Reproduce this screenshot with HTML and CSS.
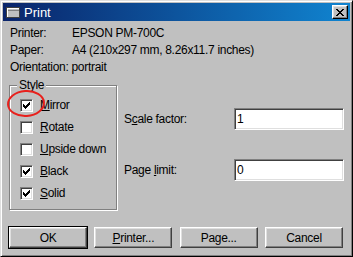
FILE: index.html
```html
<!DOCTYPE html>
<html lang="en">
<head>
    <meta charset="UTF-8">
    <meta name="viewport" content="width=device-width, initial-scale=1.0">
    <link rel="stylesheet" href="styles.css">
</head>
<body>
    <div class="window">
        <div class="titlebar">
            <svg class="title-icon" width="16" height="16" viewBox="0 0 16 16">
                <rect x="1.5" y="3.5" width="13" height="10" fill="#c0c0c0" stroke="#404040"/>
                <path d="M2 4h12v1H2zM2 4h1v9H2z" fill="#fff"/>
                <path d="M3 6h11v1H3z" fill="#808080"/>
            </svg>
            <span class="title">Print</span>
            <button class="close">
                <svg width="8" height="7" viewBox="0 0 8 7">
                    <path d="M0 0h2v1H0zM6 0h2v1H6zM1 1h2v1H1zM5 1h2v1H5zM2 2h4v1H2zM3 3h2v1H3zM2 4h4v1H2zM1 5h2v1H1zM5 5h2v1H5zM0 6h2v1H0zM6 6h2v1H6z" fill="#000"/>
                </svg>
            </button>
        </div>

        <div class="content">
            <div class="info">
                <div class="info-row"><span class="info-label">Printer:</span><span>EPSON PM-700C</span></div>
                <div class="info-row"><span class="info-label">Paper:</span><span>A4 (210x297 mm, 8.26x11.7 inches)</span></div>
                <div class="info-row">Orientation: portrait</div>
            </div>

            <div class="options">
                <fieldset class="group">
                    <legend>Style</legend>
                    <label class="check">
                        <span class="box">
                            <svg width="9" height="9" viewBox="0 0 9 9"><path d="M1 3h1v3H1zM2 4h1v3H2zM3 5h1v3H3zM4 4h1v3H4zM5 3h1v3H5zM6 2h1v3H6zM7 1h1v3H7z" fill="#000"/></svg>
                        </span>
                        <span><u>M</u>irror</span>
                        <svg class="mark" width="40" height="30" viewBox="0 0 40 30">
                            <ellipse cx="20" cy="14.5" rx="18" ry="12.5" fill="none" stroke="#e8201c" stroke-width="2" transform="rotate(-4 20 14.5)"/>
                        </svg>
                    </label>
                    <label class="check">
                        <span class="box"></span>
                        <span><u>R</u>otate</span>
                    </label>
                    <label class="check">
                        <span class="box"></span>
                        <span><u>U</u>pside down</span>
                    </label>
                    <label class="check">
                        <span class="box">
                            <svg width="9" height="9" viewBox="0 0 9 9"><path d="M1 3h1v3H1zM2 4h1v3H2zM3 5h1v3H3zM4 4h1v3H4zM5 3h1v3H5zM6 2h1v3H6zM7 1h1v3H7z" fill="#000"/></svg>
                        </span>
                        <span><u>B</u>lack</span>
                    </label>
                    <label class="check">
                        <span class="box">
                            <svg width="9" height="9" viewBox="0 0 9 9"><path d="M1 3h1v3H1zM2 4h1v3H2zM3 5h1v3H3zM4 4h1v3H4zM5 3h1v3H5zM6 2h1v3H6zM7 1h1v3H7z" fill="#000"/></svg>
                        </span>
                        <span><u>S</u>olid</span>
                    </label>
                </fieldset>

                <div class="fields">
                    <div class="field">
                        <span class="field-label">S<u>c</u>ale factor:</span>
                        <input class="edit" type="text" value="1">
                    </div>
                    <div class="field">
                        <span class="field-label">Page <u>l</u>imit:</span>
                        <input class="edit" type="text" value="0">
                    </div>
                </div>
            </div>

            <div class="buttons">
                <button class="btn default">OK</button>
                <button class="btn"><u>P</u>rinter...</button>
                <button class="btn">Pa<u>g</u>e...</button>
                <button class="btn">Cancel</button>
            </div>
        </div>
    </div>
</body>
</html>
```

FILE: styles.css
```css
body {
    margin: 0;
    font-family: "Liberation Sans", Arial, sans-serif;
    font-size: 12px;
    letter-spacing: -0.3px;
    color: #000;
    background-color: #c0c0c0;
}

.window {
    width: 353px;
    height: 257px;
    box-sizing: border-box;
    border: 1px solid;
    border-color: #dfdfdf #000 #000 #dfdfdf;
    box-shadow: inset 1px 1px #fff, inset -1px -1px #808080;
    padding: 2px;
    background-color: #c0c0c0;
}

.titlebar {
    height: 18px;
    display: flex;
    align-items: center;
    padding: 0 2px;
    background: linear-gradient(to right, #0a246a, #1084d0);
}

.title-icon {
    display: block;
    margin-right: 3px;
}

.title {
    color: #fff;
    font-size: 13px;
    letter-spacing: 0;
}

.close {
    margin-left: auto;
    width: 16px;
    height: 14px;
    padding: 0;
    display: flex;
    align-items: center;
    justify-content: center;
    background-color: #c0c0c0;
    border: 1px solid;
    border-color: #fff #000 #000 #fff;
    box-shadow: inset -1px -1px #808080, inset 1px 1px #dfdfdf;
}

.close svg {
    display: block;
}

.content {
    padding: 4px 6px 0 6px;
}

.info-row {
    height: 17px;
    line-height: 17px;
    padding-left: 1px;
    display: flex;
    white-space: nowrap;
}

.info-label {
    width: 62px;
}

.options {
    display: flex;
    align-items: flex-start;
    margin-top: 2px;
}

.group {
    width: 108px;
    box-sizing: border-box;
    margin: 0;
    padding: 2px 0 5px 10px;
    border: 1px solid #808080;
    box-shadow: 1px 1px 0 #fff, inset 1px 1px 0 #fff;
}

.group legend {
    padding: 0 2px;
    margin-left: -3px;
    line-height: 14px;
    background-color: #c0c0c0;
}

.check {
    position: relative;
    height: 22px;
    display: flex;
    align-items: center;
    gap: 7px;
    white-space: nowrap;
}

.box {
    width: 13px;
    height: 13px;
    box-sizing: border-box;
    padding: 1px;
    background-color: #fff;
    border: 1px solid;
    border-color: #808080 #fff #fff #808080;
    box-shadow: inset 1px 1px #404040, inset -1px -1px #dfdfdf;
}

.box svg {
    display: block;
}

.mark {
    position: absolute;
    left: -14px;
    top: -5px;
}

.fields {
    flex: 1;
    padding: 30px 0 0 7px;
    display: flex;
    flex-direction: column;
    gap: 29px;
}

.field {
    height: 22px;
    display: flex;
    align-items: center;
}

.field-label {
    width: 110px;
}

.edit {
    width: 110px;
    height: 22px;
    box-sizing: border-box;
    margin: 0;
    padding: 0 0 0 2px;
    font: inherit;
    letter-spacing: inherit;
    color: #000;
    background-color: #fff;
    border: 1px solid;
    border-color: #808080 #fff #fff #808080;
    box-shadow: inset 1px 1px #404040, inset -1px -1px #dfdfdf;
    outline: none;
}

.buttons {
    margin-top: 17px;
    display: flex;
    justify-content: space-between;
    padding-right: 1px;
}

.btn {
    width: 78px;
    height: 21px;
    padding: 0;
    font: inherit;
    letter-spacing: inherit;
    color: #000;
    background-color: #c0c0c0;
    border: 1px solid;
    border-color: #fff #404040 #404040 #fff;
    box-shadow: inset -1px -1px #808080, inset 1px 1px #dfdfdf;
}

.btn.default {
    outline: 1px solid #000;
}
```
